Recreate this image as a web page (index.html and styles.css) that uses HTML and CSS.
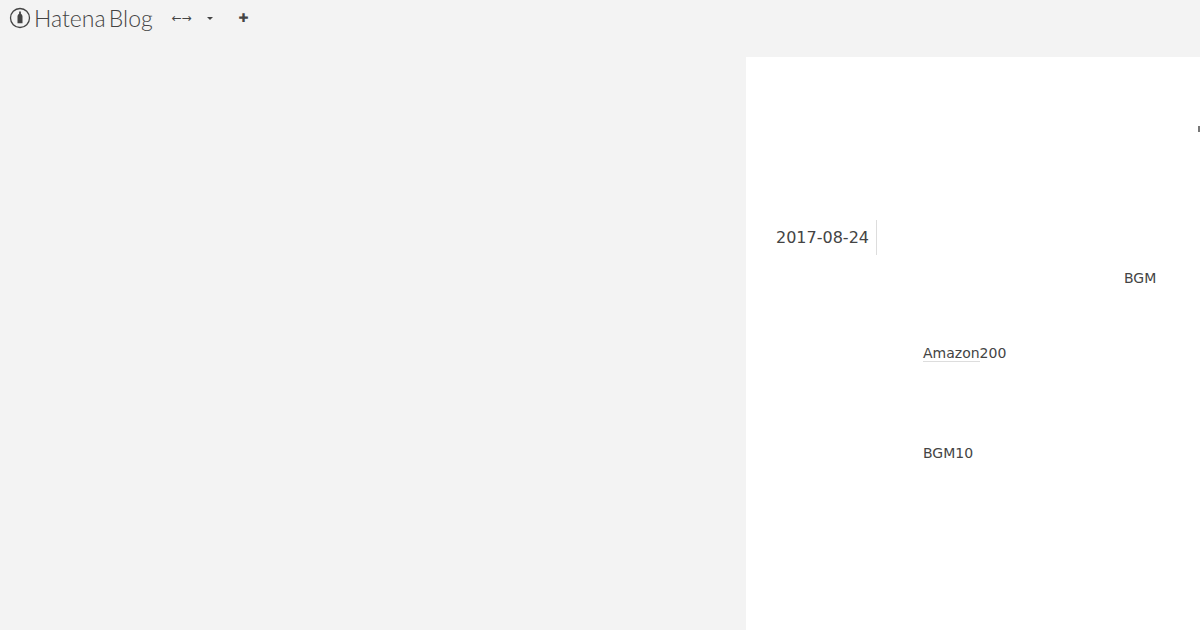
FILE: index.html
```html
<!doctype html>
<html>
  <head>
    <title>Hatena Blog</title>
    <link rel="stylesheet" href="styles.css">
  </head>
  <body class="page">
    <header class="topbar">
      <a class="logo">
        <svg class="logo-icon" width="22" height="22" viewBox="0 0 22 22">
          <circle cx="11" cy="11" r="9.5" fill="none" stroke="#444" stroke-width="1.3"/>
          <path d="M10.1 4.4h1.8v2.4c1 .7 1.6 1.6 1.6 2.8v6.6H8.5V9.6c0-1.2 .6-2.1 1.6-2.8z" fill="#444"/>
        </svg>
        <span class="logo-text">Hatena Blog</span>
      </a>
      <span class="arrows">←→</span>
      <span class="caret"></span>
      <span class="plus">✚</span>
    </header>
    <div class="layout">
      <div class="side"></div>
      <main class="main">
        <div class="mark"></div>
        <div class="date-row">
          <time class="date">2017-08-24</time>
        </div>
        <p class="line line-bgm">BGM</p>
        <p class="line line-amazon"><a class="link">Amazon</a>200</p>
        <p class="line line-ten">BGM10</p>
      </main>
    </div>
  </body>
</html>
```
FILE: styles.css
```css
html, body {
  margin: 0;
  height: 100%;
  overflow: hidden;
}
.page {
  background: #f3f3f3;
  color: #444;
  font-family: "DejaVu Sans", sans-serif;
  font-size: 14px;
}
.topbar {
  display: flex;
  align-items: center;
  height: 36px;
  margin-bottom: 21px;
  padding-left: 9px;
}
.logo {
  display: flex;
  align-items: center;
  gap: 3px;
}
.logo-text {
  font-family: "Lato", sans-serif;
  font-weight: 300;
  font-size: 23px;
  line-height: 22px;
  word-spacing: -3px;
  color: #444;
}
.arrows {
  margin-left: 19px;
  font-size: 12px;
  letter-spacing: -0.3px;
}
.caret {
  margin-left: 16px;
  border: 3px solid transparent;
  border-top: 3px solid #444;
  border-bottom: 0;
}
.plus {
  margin-left: 25px;
  font-size: 12px;
}
.layout {
  display: flex;
  height: 573px;
}
.side {
  width: 746px;
}
.main {
  flex: 1;
  background: #fff;
  position: relative;
  padding: 163px 0 0 30px;
}
.mark {
  position: absolute;
  top: 69px;
  right: 0;
  width: 2px;
  height: 6px;
  background: #777;
}
.date-row {
  display: flex;
}
.date {
  width: 100px;
  height: 35px;
  line-height: 35px;
  font-size: 16px;
  border-right: 1px solid #ddd;
}
.line {
  margin: 0;
  line-height: 20px;
}
.line-bgm {
  margin-top: 13px;
  margin-left: 348px;
}
.line-amazon {
  margin-top: 55px;
  margin-left: 147px;
}
.link {
  border-bottom: 1px solid #ddd;
}
.line-ten {
  margin-top: 80px;
  margin-left: 147px;
}
```
